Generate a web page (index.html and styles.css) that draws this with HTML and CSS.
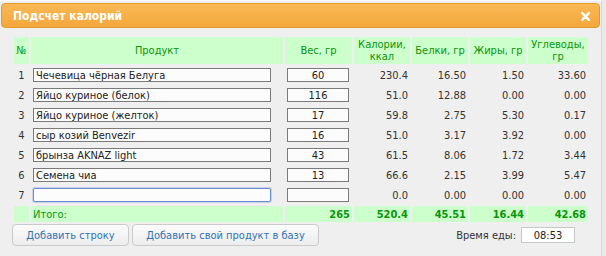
FILE: index.html
```html
<!DOCTYPE html>
<html lang="ru">
<head>
<meta charset="utf-8">
<title>Подсчет калорий</title>
<link rel="stylesheet" href="styles.css">
</head>
<body>
<div class="dialog">
  <div class="titlebar">
    <span class="title">Подсчет калорий</span>
    <svg class="close" width="9" height="9" viewBox="0 0 9 9"><path d="M1.2 1.2 L7.8 7.8 M7.8 1.2 L1.2 7.8" stroke="#fff" stroke-width="2.4" stroke-linecap="round"/></svg>
  </div>
  <div class="content">
    <table class="calc">
      <colgroup>
        <col class="c-num"><col class="c-prod"><col class="c-w"><col class="c-kcal"><col class="c-p"><col class="c-f"><col class="c-c">
      </colgroup>
      <thead>
        <tr><th>№</th><th>Продукт</th><th>Вес, гр</th><th>Калории,<br>ккал</th><th>Белки, гр</th><th>Жиры, гр</th><th>Углеводы,<br>гр</th></tr>
      </thead>
      <tbody>
        <tr><td class="n">1</td><td><input class="prod" value="Чечевица чёрная Белуга"></td><td><input class="w" value="60"></td><td class="v">230.4</td><td class="v">16.50</td><td class="v">1.50</td><td class="v">33.60</td></tr>
        <tr><td class="n">2</td><td><input class="prod" value="Яйцо куриное (белок)"></td><td><input class="w" value="116"></td><td class="v">51.0</td><td class="v">12.88</td><td class="v">0.00</td><td class="v">0.00</td></tr>
        <tr><td class="n">3</td><td><input class="prod" value="Яйцо куриное (желток)"></td><td><input class="w" value="17"></td><td class="v">59.8</td><td class="v">2.75</td><td class="v">5.30</td><td class="v">0.17</td></tr>
        <tr><td class="n">4</td><td><input class="prod" value="сыр козий Benvezir"></td><td><input class="w" value="16"></td><td class="v">51.0</td><td class="v">3.17</td><td class="v">3.92</td><td class="v">0.00</td></tr>
        <tr><td class="n">5</td><td><input class="prod" value="брынза AKNAZ light"></td><td><input class="w" value="43"></td><td class="v">61.5</td><td class="v">8.06</td><td class="v">1.72</td><td class="v">3.44</td></tr>
        <tr><td class="n">6</td><td><input class="prod" value="Семена чиа"></td><td><input class="w" value="13"></td><td class="v">66.6</td><td class="v">2.15</td><td class="v">3.99</td><td class="v">5.47</td></tr>
        <tr><td class="n">7</td><td><input class="prod focus" value=""></td><td><input class="w" value=""></td><td class="v">0.0</td><td class="v">0.00</td><td class="v">0.00</td><td class="v">0.00</td></tr>
      </tbody>
      <tfoot>
        <tr><td></td><td class="label">Итого:</td><td class="t">265</td><td class="t">520.4</td><td class="t">45.51</td><td class="t">16.44</td><td class="t">42.68</td></tr>
      </tfoot>
    </table>
    <div class="footer">
      <button class="btn btn-row">Добавить строку</button>
      <button class="btn btn-prod">Добавить свой продукт в базу</button>
      <div class="time">
        <span class="time-label">Время еды:</span>
        <input class="time-input" value="08:53">
      </div>
    </div>
  </div>
</div>
</body>
</html>
```

FILE: styles.css
```css
html, body {
  margin: 0;
  padding: 0;
  background: #e9e9e9;
}
body {
  font-family: "DejaVu Sans Condensed", "DejaVu Sans", sans-serif;
  font-stretch: condensed;
  font-size: 11px;
  color: #333;
}
.dialog {
  width: 602px;
  height: 256px;
  background: #efefef;
  border-right: 1px solid #d8d8d8;
  border-top: 1px solid #fafafa;
  box-sizing: border-box;
  padding: 2px 1px 0 1px;
}
.titlebar {
  height: 25px;
  box-sizing: border-box;
  border: 1px solid #e29a2c;
  border-radius: 4px;
  background: linear-gradient(#f9b955, #f4a73c);
  display: flex;
  align-items: center;
  justify-content: space-between;
  padding: 0 9px 0 11px;
}
.title {
  color: #fff;
  font-weight: bold;
  font-size: 12px;
}
.close {
  display: block;
  margin-top: 1px;
}
.content {
  padding: 7px 0 0 11px;
}
.calc {
  table-layout: fixed;
  border-collapse: separate;
  border-spacing: 2px;
  width: 578px;
}
.c-num { width: 15px; }
.c-prod { width: 252px; }
.c-w { width: 67px; }
.c-kcal { width: 56px; }
.c-p { width: 56px; }
.c-f { width: 56px; }
.c-c { width: 60px; }
.calc th {
  background: #ccffcc;
  color: #0a960a;
  font-weight: normal;
  height: 27px;
  padding: 0;
  line-height: 12px;
  text-align: center;
  vertical-align: middle;
}
.calc tbody td {
  height: 18px;
  padding: 0;
  vertical-align: middle;
}
.calc td.n {
  text-align: center;
  color: #333;
}
.calc td.v {
  text-align: right;
  padding-right: 2px;
}
input {
  font-family: inherit;
  font-stretch: condensed;
  font-size: 11px;
  color: #222;
  margin: 0;
  outline: none;
}
.prod {
  display: block;
  width: 238px;
  height: 14px;
  box-sizing: border-box;
  border: 1px solid #7a7a7a;
  background: #fcfcfc;
  padding: 0 2px;
  margin-left: 2px;
}
.prod.focus {
  border-color: #6a8ed6;
  border-radius: 2px;
  box-shadow: 0 0 0 1px rgba(130, 160, 225, 0.35);
}
.w {
  display: block;
  width: 62px;
  height: 14px;
  box-sizing: border-box;
  border: 1px solid #7a7a7a;
  background: #fcfcfc;
  padding: 0;
  margin-left: 2px;
  text-align: center;
}
.calc tfoot td {
  background: #ccffcc;
  color: #0a960a;
  height: 16px;
  padding: 0;
  vertical-align: middle;
}
.calc tfoot td.label {
  padding-left: 2px;
}
.calc tfoot td.t {
  text-align: right;
  font-weight: bold;
  padding-right: 2px;
}
.footer {
  display: flex;
  align-items: center;
  gap: 3px;
  width: 578px;
}
.btn {
  height: 22px;
  font-family: inherit;
  font-stretch: condensed;
  font-size: 11px;
  color: #2f73b7;
  background: linear-gradient(#fbfbfb, #ededed);
  border: 1px solid #cacaca;
  border-radius: 4px;
  padding: 0;
  margin: 0;
}
.btn-row { width: 117px; }
.btn-prod { width: 187px; }
.time {
  margin-left: auto;
  display: flex;
  align-items: center;
  gap: 5px;
  margin-right: 15px;
}
.time-label {
  font-size: 11px;
  color: #333;
}
.time-input {
  width: 54px;
  height: 16px;
  box-sizing: border-box;
  border: 1px solid #c4cbc4;
  background: #fff;
  text-align: center;
  font-size: 11px;
  padding: 0;
}
```
